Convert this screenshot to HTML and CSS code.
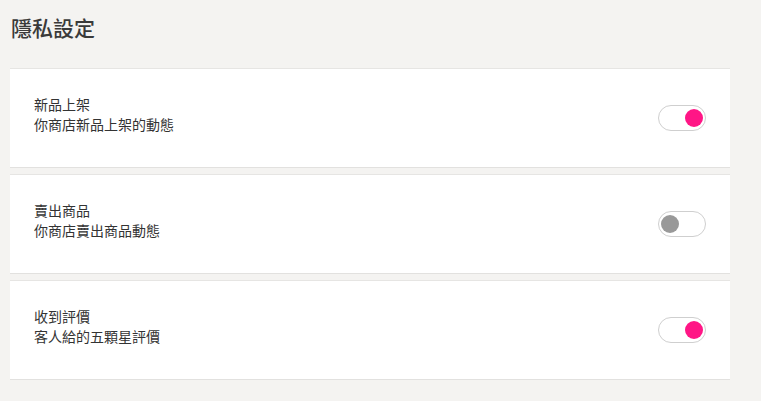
FILE: index.html
```html
<!DOCTYPE html>
<html lang="zh-Hant">
<head>
<meta charset="utf-8">
<link rel="stylesheet" href="styles.css">
</head>
<body>
<div class="page">
  <h1 class="title">隱私設定</h1>
  <div class="list">
    <div class="card">
      <div class="text">
        <div>新品上架</div>
        <div>你商店新品上架的動態</div>
      </div>
      <span class="toggle on"><span class="knob"></span></span>
    </div>
    <div class="card">
      <div class="text">
        <div>賣出商品</div>
        <div>你商店賣出商品動態</div>
      </div>
      <span class="toggle"><span class="knob"></span></span>
    </div>
    <div class="card">
      <div class="text">
        <div>收到評價</div>
        <div>客人給的五顆星評價</div>
      </div>
      <span class="toggle on"><span class="knob"></span></span>
    </div>
  </div>
</div>
</body>
</html>
```
FILE: styles.css
```css
html, body {
  margin: 0;
  padding: 0;
  background: #f4f3f1;
}
body {
  font-family: "Noto Sans CJK TC", "Noto Sans", "Liberation Sans", sans-serif;
  color: #333;
}
.page {
  padding: 0 31px 0 10px;
}
.title {
  margin: 0;
  padding: 13px 0 27px 1px;
  font-size: 21px;
  line-height: 28px;
  font-weight: 500;
  color: #3a3a3a;
}
.list {
  display: flex;
  flex-direction: column;
  gap: 6px;
}
.card {
  height: 98px;
  background: #fff;
  border-top: 1px solid #e6e5e3;
  border-bottom: 1px solid #e2e1df;
  display: flex;
  align-items: center;
  justify-content: space-between;
  padding: 0 24px;
}
.text {
  font-size: 14px;
  line-height: 20px;
  color: #333;
  margin-bottom: 9px;
}
.toggle {
  width: 42px;
  height: 24px;
  border: 1px solid #cfcfcf;
  border-radius: 14px;
  background: #fff;
  display: flex;
  align-items: center;
  padding: 0 2px;
}
.knob {
  width: 18px;
  height: 18px;
  border-radius: 50%;
  background: #999;
}
.toggle.on {
  justify-content: flex-end;
}
.toggle.on .knob {
  background: #ff1686;
}
```
